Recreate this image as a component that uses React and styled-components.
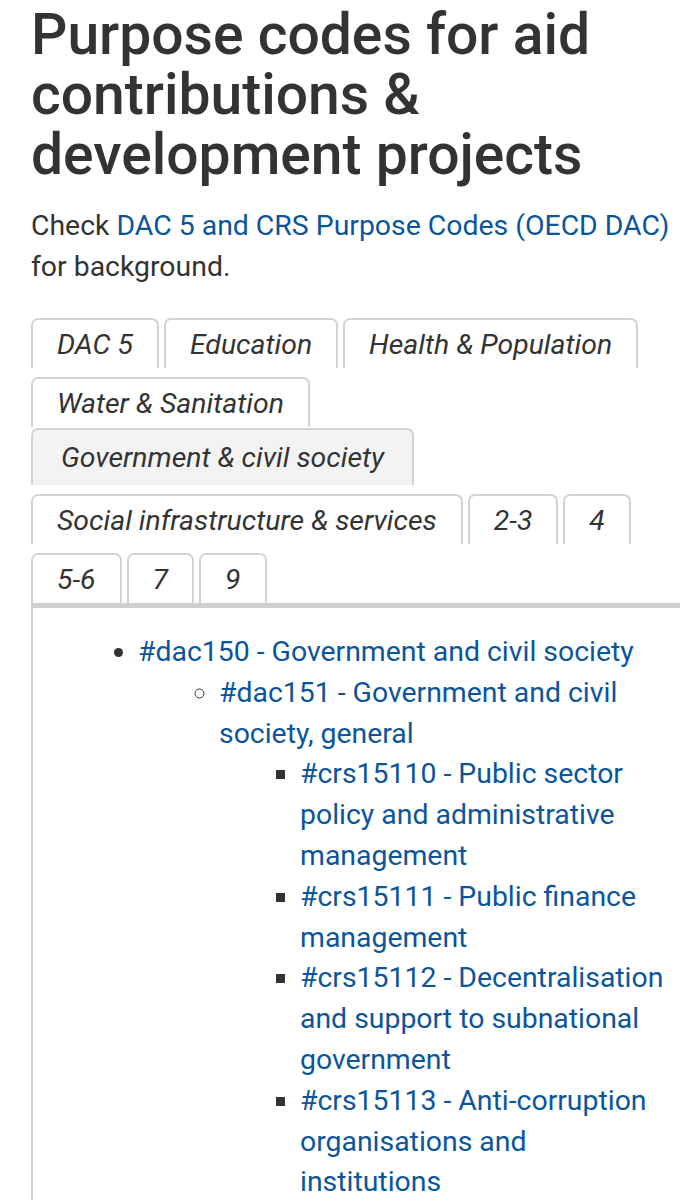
import React, { useState } from 'react'
import styled, { createGlobalStyle } from 'styled-components'

const GlobalStyle = createGlobalStyle`
  html, body {
    margin: 0;
    padding: 0;
    background: #fff;
    overflow-x: hidden;
  }
  body {
    font-family: Roboto, "Liberation Sans", sans-serif;
    color: #333;
  }
`

const tabs = [
  'DAC 5',
  'Education',
  'Health & Population',
  'Water & Sanitation',
  'Government & civil society',
  'Social infrastructure & services',
  '2-3',
  '4',
  '5-6',
  '7',
  '9',
]

const codes = [
  {
    code: '#dac150',
    title: 'Government and civil society',
    children: [
      {
        code: '#dac151',
        title: 'Government and civil society, general',
        children: [
          { code: '#crs15110', title: 'Public sector policy and administrative management' },
          { code: '#crs15111', title: 'Public finance management' },
          { code: '#crs15112', title: 'Decentralisation and support to subnational government' },
          { code: '#crs15113', title: 'Anti-corruption organisations and institutions' },
        ],
      },
    ],
  },
]

function CodeList({ items, level }) {
  return (
    <List level={level}>
      {items.map((item) => (
        <Item key={item.code}>
          <Link href={'#' + item.code.slice(1)}>
            {item.code} - {item.title}
          </Link>
          {item.children && <CodeList items={item.children} level={level + 1} />}
        </Item>
      ))}
    </List>
  )
}

export default function App() {
  const [active, setActive] = useState('Government & civil society')

  return (
    <Page>
      <GlobalStyle />
      <Title>Purpose codes for aid contributions &amp; development projects</Title>
      <Intro>
        Check <Link href="#oecd">DAC 5 and CRS Purpose Codes (OECD DAC)</Link> for background.
      </Intro>
      <TabBar>
        {tabs.map((t) => (
          <Tab key={t} active={t === active} onClick={() => setActive(t)}>
            {t}
          </Tab>
        ))}
      </TabBar>
      <Panel>
        <CodeList items={codes} level={1} />
      </Panel>
    </Page>
  )
}

const Page = styled.div`
  padding: 5px 0 0 31px;
`

const Title = styled.h1`
  margin: 0;
  font-size: 57px;
  line-height: 60px;
  font-weight: 500;
  color: #333;
`

const Intro = styled.p`
  margin: 20px 0 0;
  font-size: 28.4px;
  line-height: 41px;
  color: #333;
`

const Link = styled.a`
  color: #0b559c;
  text-decoration: none;
`

const TabBar = styled.div`
  display: flex;
  flex-wrap: wrap;
  align-items: flex-end;
  column-gap: 5px;
  margin-top: 22px;
  padding-right: 20px;
`

const Tab = styled.div`
  box-sizing: border-box;
  margin-top: ${(p) => (p.active ? '1px' : '9px')};
  height: ${(p) => (p.active ? '57px' : '50px')};
  padding: 0 ${(p) => (p.active ? '28px' : '24px')};
  display: flex;
  align-items: center;
  border: 2px solid #d3d3d3;
  border-bottom: none;
  border-radius: 7px 7px 0 0;
  background: ${(p) => (p.active ? '#f3f3f3' : '#fff')};
  font-size: 28.4px;
  font-style: italic;
  color: #333;
  white-space: nowrap;
  cursor: pointer;
`

const Panel = styled.div`
  border-top: 5px solid #cfcfcf;
  border-left: 2px solid #cfcfcf;
  padding: 24px 12px 20px 24px;
  min-height: 600px;
`

const List = styled.ul`
  margin: 0;
  padding-left: 81px;
  list-style-type: ${(p) => (p.level === 1 ? 'disc' : p.level === 2 ? 'circle' : 'square')};
  font-size: 28.4px;
  line-height: 40.8px;
  color: #333;
`

const Item = styled.li``
